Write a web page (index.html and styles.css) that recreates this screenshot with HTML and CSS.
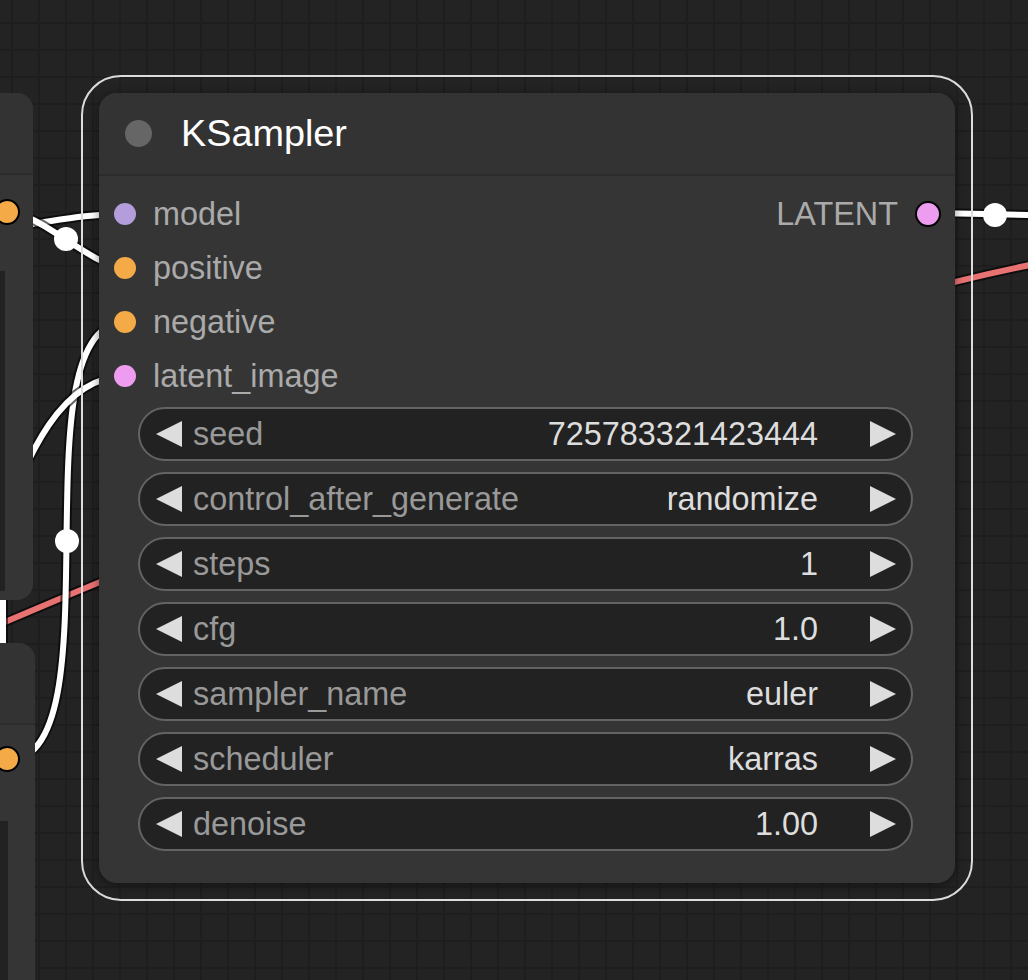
FILE: index.html
```html
<!DOCTYPE html>
<html lang="en">
<head>
<meta charset="utf-8">
<title>KSampler</title>
<link rel="stylesheet" href="styles.css">
</head>
<body>
<div class="canvas">
  <svg class="links" width="1028" height="980" viewBox="0 0 1028 980">
    <g class="link-red">
      <path class="edge" d="M5 622 C150 560, 700 330, 1040 263"/>
      <path class="core" d="M5 622 C150 560, 700 330, 1040 263"/>
    </g>
    <g class="link-white">
      <path class="edge" d="M3 580 L3 670"/>
      <path class="core" d="M3 580 L3 670"/>
      <path class="edge" d="M-10 228 C40 226, 70 214, 126 214"/>
      <path class="core" d="M-10 228 C40 226, 70 214, 126 214"/>
      <path class="edge" d="M7 212 C40 212, 93 268, 126 268"/>
      <path class="core" d="M7 212 C40 212, 93 268, 126 268"/>
      <path class="edge" d="M7 761 C121 761, 12 322, 126 322"/>
      <path class="core" d="M7 761 C121 761, 12 322, 126 322"/>
      <path class="edge" d="M-20 575 C20 480, 50 376, 126 376"/>
      <path class="core" d="M-20 575 C20 480, 50 376, 126 376"/>
      <path class="edge" d="M928 213 C960 213, 990 215, 1040 215"/>
      <path class="core" d="M928 213 C960 213, 990 215, 1040 215"/>
      <circle class="mid" cx="66" cy="239" r="12"/>
      <circle class="mid" cx="67" cy="541" r="12"/>
      <circle class="mid" cx="995" cy="215" r="12"/>
    </g>
  </svg>

  <div class="side side-a">
    <div class="side-title"></div>
    <div class="side-slot"><span class="dot cond ring"></span></div>
    <div class="side-panel"></div>
  </div>

  <div class="side side-b">
    <div class="side-title"></div>
    <div class="side-slot"><span class="dot cond ring"></span></div>
    <div class="side-panel"></div>
  </div>

  <div class="selection">
    <div class="node">
      <div class="node-title">
        <span class="title-dot"></span>
        <span class="title-text">KSampler</span>
      </div>
      <div class="node-body">
        <div class="slots">
          <div class="inputs">
            <div class="slot"><span class="dot model"></span><span class="slot-label">model</span></div>
            <div class="slot"><span class="dot cond"></span><span class="slot-label">positive</span></div>
            <div class="slot"><span class="dot cond"></span><span class="slot-label">negative</span></div>
            <div class="slot"><span class="dot latent"></span><span class="slot-label">latent_image</span></div>
          </div>
          <div class="outputs">
            <div class="slot out"><span class="slot-label">LATENT</span><span class="dot latent ring"></span></div>
          </div>
        </div>
        <div class="widgets">
          <div class="widget">
            <svg class="arrow" viewBox="0 0 26 26"><polygon points="26,0 26,26 0,13"/></svg>
            <span class="w-label">seed</span>
            <span class="w-value">725783321423444</span>
            <svg class="arrow" viewBox="0 0 26 26"><polygon points="0,0 0,26 26,13"/></svg>
          </div>
          <div class="widget">
            <svg class="arrow" viewBox="0 0 26 26"><polygon points="26,0 26,26 0,13"/></svg>
            <span class="w-label">control_after_generate</span>
            <span class="w-value">randomize</span>
            <svg class="arrow" viewBox="0 0 26 26"><polygon points="0,0 0,26 26,13"/></svg>
          </div>
          <div class="widget">
            <svg class="arrow" viewBox="0 0 26 26"><polygon points="26,0 26,26 0,13"/></svg>
            <span class="w-label">steps</span>
            <span class="w-value">1</span>
            <svg class="arrow" viewBox="0 0 26 26"><polygon points="0,0 0,26 26,13"/></svg>
          </div>
          <div class="widget">
            <svg class="arrow" viewBox="0 0 26 26"><polygon points="26,0 26,26 0,13"/></svg>
            <span class="w-label">cfg</span>
            <span class="w-value">1.0</span>
            <svg class="arrow" viewBox="0 0 26 26"><polygon points="0,0 0,26 26,13"/></svg>
          </div>
          <div class="widget">
            <svg class="arrow" viewBox="0 0 26 26"><polygon points="26,0 26,26 0,13"/></svg>
            <span class="w-label">sampler_name</span>
            <span class="w-value">euler</span>
            <svg class="arrow" viewBox="0 0 26 26"><polygon points="0,0 0,26 26,13"/></svg>
          </div>
          <div class="widget">
            <svg class="arrow" viewBox="0 0 26 26"><polygon points="26,0 26,26 0,13"/></svg>
            <span class="w-label">scheduler</span>
            <span class="w-value">karras</span>
            <svg class="arrow" viewBox="0 0 26 26"><polygon points="0,0 0,26 26,13"/></svg>
          </div>
          <div class="widget">
            <svg class="arrow" viewBox="0 0 26 26"><polygon points="26,0 26,26 0,13"/></svg>
            <span class="w-label">denoise</span>
            <span class="w-value">1.00</span>
            <svg class="arrow" viewBox="0 0 26 26"><polygon points="0,0 0,26 26,13"/></svg>
          </div>
        </div>
      </div>
    </div>
  </div>
</div>
</body>
</html>
```

FILE: styles.css
```css
html, body {
  margin: 0;
  padding: 0;
}

body {
  width: 1028px;
  height: 980px;
  overflow: hidden;
  background-color: #232323;
  font-family: "Liberation Sans", Arial, Helvetica, sans-serif;
}

.canvas {
  position: relative;
  width: 1028px;
  height: 980px;
  overflow: hidden;
  background-color: #232323;
  background-image:
    linear-gradient(to right, #1e1e1e 2px, transparent 2px),
    linear-gradient(to bottom, #1e1e1e 2px, transparent 2px);
  background-size: 27px 27px;
  background-position: 11px 22px;
}

/* links */
.links {
  position: absolute;
  left: 0;
  top: 0;
}

.links path {
  fill: none;
  stroke-linecap: round;
}

.links .edge {
  stroke: rgba(0, 0, 0, 0.6);
  stroke-width: 10;
}

.link-white .core {
  stroke: #ffffff;
  stroke-width: 6;
}

.link-red .core {
  stroke: #e87272;
  stroke-width: 6;
}

.links .mid {
  fill: #ffffff;
}

/* side nodes (partially visible) */
.side {
  position: absolute;
  left: -20px;
  background: #353535;
  display: flex;
  flex-direction: column;
  overflow: hidden;
}

.side-a {
  top: 93px;
  width: 53px;
  height: 507px;
  border-radius: 0 16px 16px 0;
}

.side-b {
  top: 643px;
  width: 55px;
  height: 360px;
  border-radius: 0 16px 0 0;
}

.side-title {
  height: 80px;
  flex: none;
  background: #333333;
  border-bottom: 2px solid #2c2c2c;
}

.side-slot {
  height: 54px;
  margin-top: 10px;
  flex: none;
  display: flex;
  align-items: center;
  justify-content: flex-end;
}

.side-a .side-slot .dot {
  margin-right: 13px;
}

.side-b .side-slot {
  margin-top: 7px;
}

.side-b .side-slot .dot {
  margin-right: 15px;
}

.side-panel {
  background: #222222;
  flex: none;
}

.side-a .side-panel {
  width: 25px;
  height: 320px;
  margin-top: 32px;
}

.side-b .side-panel {
  width: 28px;
  height: 200px;
  margin-top: 35px;
}

/* selected KSampler node */
.selection {
  position: absolute;
  left: 81px;
  top: 75px;
  padding: 16px;
  border: 2px solid #dcdcdc;
  border-radius: 40px;
}

.node {
  width: 856px;
  background: #353535;
  border-radius: 18px;
  box-shadow: 0 2px 10px rgba(0, 0, 0, 0.45);
  overflow: hidden;
}

.node-title {
  height: 81px;
  background: #333333;
  border-bottom: 2px solid #2b2b2b;
  display: flex;
  align-items: center;
  padding-left: 26px;
  gap: 29px;
}

.title-dot {
  width: 27px;
  height: 27px;
  border-radius: 50%;
  background: #666666;
  flex: none;
}

.title-text {
  color: #ffffff;
  font-size: 37.8px;
  line-height: 81px;
}

.node-body {
  padding: 11px 0 32px;
}

.slots {
  display: flex;
  justify-content: space-between;
}

.slot {
  height: 54px;
  display: flex;
  align-items: center;
  gap: 17px;
  font-size: 32.4px;
  line-height: 54px;
  color: #aaaaaa;
}

.inputs .slot {
  padding-left: 15px;
}

.outputs .slot {
  padding-right: 14px;
}

.dot {
  display: block;
  width: 22px;
  height: 22px;
  border-radius: 50%;
  flex: none;
  box-sizing: border-box;
}

.dot.ring {
  width: 26px;
  height: 26px;
  border: 2.5px solid #000000;
}

.dot.model { background: #b39ddb; }
.dot.cond { background: #f4aa46; }
.dot.latent { background: #ee9cf0; }

/* widgets */
.widgets {
  margin-top: 4px;
  display: flex;
  flex-direction: column;
  gap: 11px;
  padding: 0 42px 0 39px;
}

.widget {
  height: 54px;
  box-sizing: border-box;
  border: 2px solid #636363;
  border-radius: 27px;
  background: #222222;
  display: flex;
  align-items: center;
  padding: 0 15px 0 16px;
  font-size: 32.4px;
  line-height: 50px;
}

.arrow {
  width: 26px;
  height: 26px;
  flex: none;
}

.arrow polygon {
  fill: #dddddd;
}

.w-label {
  color: #999999;
  margin-left: 11px;
}

.w-value {
  color: #dddddd;
  margin-left: auto;
  margin-right: 52px;
}
```
